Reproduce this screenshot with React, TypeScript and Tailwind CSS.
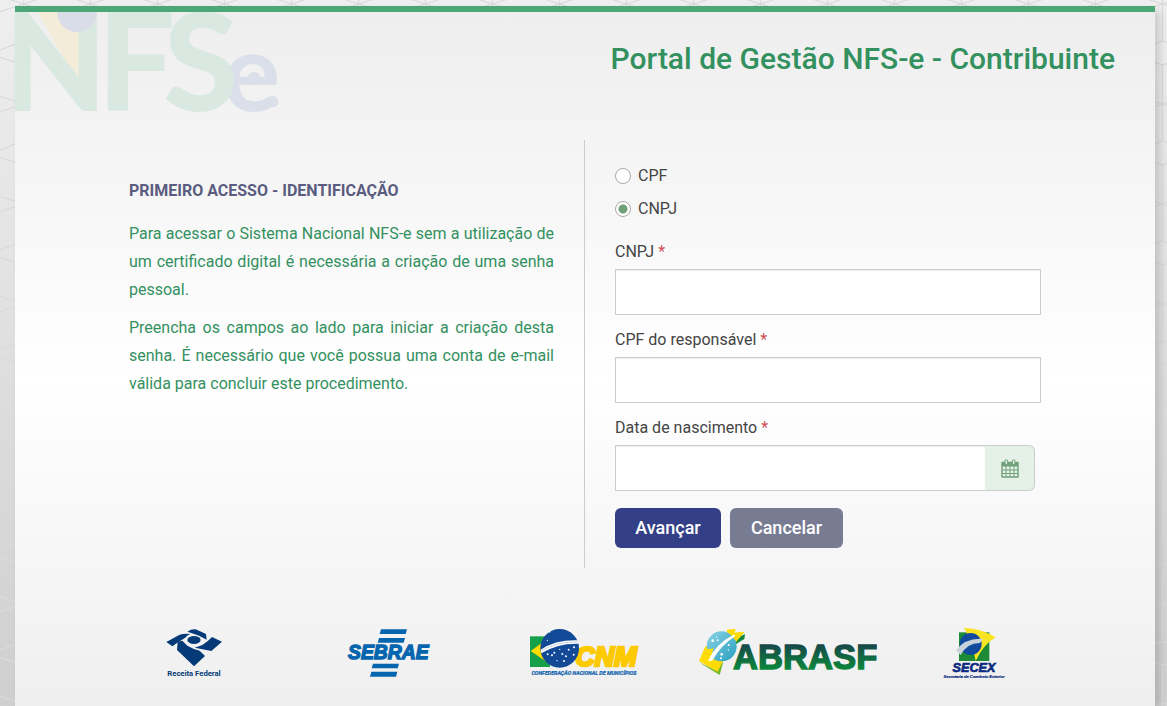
import { useState } from 'react';

function BackgroundPattern() {
  return (
    <svg className="absolute inset-0 h-full w-full" aria-hidden="true">
      <defs>
        <pattern id="cubes" x="-10" y="4" width="67" height="100" patternUnits="userSpaceOnUse">
          <g fill="none" stroke="#dadada" strokeWidth="1.3">
            <path d="M33.5 0V37M33.5 61V100M0 11V89M67 11V89" />
            <path d="M0 11L33.5 0L67 11M0 89L33.5 100L67 89" />
            <path d="M0 50L33.5 37L67 50M0 50L33.5 61L67 50" />
          </g>
        </pattern>
      </defs>
      <rect width="100%" height="100%" fill="url(#cubes)" />
    </svg>
  );
}

function NfseLogo() {
  return (
    <svg className="h-[104px] w-[270px]" viewBox="45 36 810 312" role="img" aria-label="NFSe">
      <path d="M112 36H237V252L200 190Z" fill="#f3ecd9" />
      <g fontFamily="Lato, sans-serif" fontWeight="700">
        <text x="667" y="332" fontSize="326" fill="#dadfe9">e</text>
        <g fontSize="404" fill="#d9e9e2" stroke="#d9e9e2" strokeWidth="6" strokeLinejoin="round">
          <text x="8" y="330">N</text>
          <text x="294" y="330">F</text>
          <text x="492" y="330">S</text>
        </g>
      </g>
      <path d="M171 36A60 60 0 0 0 291 36Z" fill="#d9dde8" />
      <circle cx="763" cy="236" r="20" fill="#dadfe9" />
      <circle cx="818" cy="305" r="17" fill="#dadfe9" />
    </svg>
  );
}

function CalendarIcon() {
  return (
    <svg className="h-[19px] w-[18px]" viewBox="0 0 18 19" fill="none" aria-hidden="true">
      <path d="M1 3.5h16v4H1z" fill="#6fa07a" />
      <path d="M1 3.5h16v14.5H1z" stroke="#6fa07a" strokeWidth="1.4" strokeLinejoin="round" />
      <path d="M1 11h16M1 14.5h16M5 7v11M9 7v11M13 7v11" stroke="#6fa07a" />
      <rect x="4" y="0.8" width="2.6" height="4.6" rx="1.2" fill="#e5f0e6" stroke="#6fa07a" />
      <rect x="11.4" y="0.8" width="2.6" height="4.6" rx="1.2" fill="#e5f0e6" stroke="#6fa07a" />
    </svg>
  );
}

function ReceitaLogo() {
  return (
    <svg className="h-[54px] w-[60px]" viewBox="43 33 180 162" fill="#053a78" role="img" aria-label="Receita Federal">
      <path d="M50 81L90 59Q104 55 122 57Q112 61 107 68Q86 80 68 94Z" />
      <path d="M113 50Q124 42 138 43L169 57L171 74L148 62Q132 56 113 50Z" />
      <ellipse cx="133" cy="75" rx="20" ry="12" />
      <path d="M135 98L158 90Q174 80 187 66L217 80L185 108Z" />
      <path d="M84 80L98 77L113 92Q130 102 150 107L166 123L133 154L82 105Z" />
      <text x="133" y="183" textAnchor="middle" fontSize="23" fontWeight="700" fontFamily="Roboto, sans-serif">
        Receita Federal
      </text>
    </svg>
  );
}

function SebraeLogo() {
  return (
    <svg className="h-[54px] w-[84px]" viewBox="51 33 252 162" fill="#0565ae" role="img" aria-label="Sebrae">
      <path d="M153 43h78l-4 14h-78zM147 69h78l-4 14h-78zM129 146h78l-4 14h-78zM124 170h78l-4 15h-78z" />
      <text x="54" y="133" fontSize="58" fontWeight="700" fontStyle="italic" stroke="#0565ae" strokeWidth="4" fontFamily="'Liberation Sans', sans-serif">
        SEBRAE
      </text>
    </svg>
  );
}

function CnmLogo() {
  return (
    <svg className="h-[54px] w-[112px]" viewBox="24 33 336 162" role="img" aria-label="CNM">
      <path d="M30 64h60v92H30z" fill="#16a049" />
      <path d="M32 108L90 66V148Z" fill="#fedc00" />
      <text x="166" y="153" fontSize="81" fontWeight="700" fontStyle="italic" fill="#fdc900" stroke="#fdc900" strokeWidth="8" fontFamily="'Liberation Sans', sans-serif">
        CNM
      </text>
      <circle cx="119" cy="100" r="58" fill="#124a98" />
      <path d="M62 104Q108 74 172 76L176 86Q112 84 64 115Z" fill="#fff" />
      <path d="M66 107Q112 80 172 81" fill="none" stroke="#6688b8" strokeWidth="2" strokeDasharray="3 2" />
      <g fill="#fff">
        <circle cx="88" cy="50" r="3" />
        <circle cx="82" cy="76" r="2" />
        <circle cx="83" cy="118" r="3" />
        <circle cx="96" cy="121" r="3" />
        <circle cx="103" cy="113" r="3" />
        <circle cx="119" cy="103" r="2" />
        <circle cx="127" cy="117" r="3" />
        <circle cx="138" cy="124" r="3" />
        <circle cx="146" cy="104" r="3" />
        <circle cx="162" cy="97" r="3" />
        <circle cx="161" cy="119" r="3" />
        <circle cx="132" cy="138" r="3" />
        <circle cx="111" cy="137" r="2" />
      </g>
      <text x="192" y="181" textAnchor="middle" fontSize="16" fontWeight="700" fontStyle="italic" fill="#1061ad" stroke="#1061ad" strokeWidth="0.6" fontFamily="Roboto, sans-serif">
        CONFEDERAÇÃO NACIONAL DE MUNICÍPIOS
      </text>
    </svg>
  );
}

function AbrasfLogo() {
  return (
    <svg className="h-[54px] w-[196px]" viewBox="-26 33 588 162" role="img" aria-label="Abrasf">
      <defs>
        <linearGradient id="abrasf-text" x1="0" y1="90" x2="0" y2="166" gradientUnits="userSpaceOnUse">
          <stop offset="0" stopColor="#16484a" />
          <stop offset="1" stopColor="#0b8a3b" />
        </linearGradient>
        <linearGradient id="abrasf-globe" x1="0" y1="0" x2="1" y2="1">
          <stop offset="0" stopColor="#8bd3e6" />
          <stop offset="1" stopColor="#279fc0" />
        </linearGradient>
      </defs>
      <path d="M28 142L90 180L101 140L92 148L84 168Z" fill="#75b72c" />
      <path d="M130 72L166 58L164 72L138 88Z" fill="#118a3e" />
      <path d="M45 98L28 138L84 170L98 142L140 80L165 50L134 54L138 43L113 44L120 53L80 60Z" fill="#ffdb08" />
      <circle cx="96" cy="94" r="45" fill="url(#abrasf-globe)" />
      <path d="M45 98Q60 106 72 98L62 136Q48 124 45 98Z" fill="#ffdb08" />
      <path d="M112 44L138 43L133 53L163 50L136 76Q128 60 112 52Z" fill="#ffdb08" />
      <path d="M55 138Q76 88 134 58L136 64Q92 92 68 137Z" fill="#fff" />
      <g fill="#fff">
        <circle cx="69" cy="77" r="4" />
        <circle cx="81" cy="66" r="2" />
        <circle cx="84" cy="76" r="3" />
        <circle cx="96" cy="118" r="4" />
        <circle cx="94" cy="130" r="3" />
        <circle cx="117" cy="90" r="3" />
        <circle cx="116" cy="105" r="2" />
      </g>
      <text x="130" y="163" fontSize="104" fontWeight="700" fill="url(#abrasf-text)" stroke="url(#abrasf-text)" strokeWidth="4" fontFamily="'Liberation Sans', sans-serif">
        ABRASF
      </text>
    </svg>
  );
}

function SecexLogo() {
  return (
    <svg className="h-[54px] w-[66px]" viewBox="34 33 198 162" role="img" aria-label="Secex">
      <path d="M88 52h91v86H88z" fill="#1d8a35" />
      <path d="M103 38Q160 42 198 67Q160 90 138 138Q130 84 103 38Z" fill="#f8e422" />
      <circle cx="123" cy="87" r="33" fill="#124a9e" />
      <path d="M79 106Q108 68 160 72Q156 80 150 84Q112 84 93 120Z" fill="#c9d3dc" />
      <g fill="#0a2a80" stroke="#0a2a80" fontWeight="700" fontStyle="italic" textAnchor="middle" fontFamily="'Liberation Sans', sans-serif">
        <text x="133" y="171" fontSize="38" strokeWidth="2">SECEX</text>
        <text x="133" y="188" fontSize="12" strokeWidth="0.6">Secretaria de Comércio Exterior</text>
      </g>
    </svg>
  );
}

function Required() {
  return <span className="text-[#cf4f55]">*</span>;
}

const inputClass =
  'h-[46px] w-full border border-[#ccc] bg-white px-3 text-base shadow-[inset_0_1px_1px_rgba(0,0,0,0.075)] focus:outline-none focus:border-[#4ba776]';

const radioClass =
  'h-4 w-4 appearance-none rounded-full border border-[#aaa] bg-white checked:bg-[radial-gradient(circle,#6fa07a_4px,white_5px)]';

export default function App() {
  const [tipo, setTipo] = useState('cnpj');

  return (
    <div className="relative min-h-screen bg-linear-to-b from-[#efefef] to-[#cfcfcf] pt-1.5 pl-[15px] pr-3 font-[Roboto,sans-serif] text-base text-[#444]">
      <BackgroundPattern />

      <main className="relative min-h-[calc(100vh-6px)] border-t-6 border-[#4ba776] bg-linear-to-b from-[#eee] via-white via-[53%] to-[#efefef] shadow-[5px_5px_8px_rgba(0,0,0,0.15)]">
        <header className="flex h-32 items-start justify-between">
          <NfseLogo />
          <h1 className="mt-7 mr-10 text-[30px] leading-[38px] font-medium text-[#33905f]">
            Portal de Gestão NFS-e - Contribuinte
          </h1>
        </header>

        <div className="grid grid-cols-2 px-[10%]">
          <section className="border-r border-[#ccc] pt-[37px] pr-[30px] text-justify leading-7 text-[#33905f]">
            <h2 className="mb-[15px] font-bold text-[#5a5c80]">PRIMEIRO ACESSO - IDENTIFICAÇÃO</h2>
            <p className="mb-[10px]">
              Para acessar o Sistema Nacional NFS-e sem a utilização de um certificado digital é
              necessária a criação de uma senha pessoal.
            </p>
            <p>
              Preencha os campos ao lado para iniciar a criação desta senha. É necessário que você
              possua uma conta de e-mail válida para concluir este procedimento.
            </p>
          </section>

          <form className="pt-6 pb-5 pl-[30px]" onSubmit={(e) => e.preventDefault()}>
            <div className="mb-[19px] flex flex-col items-start gap-[9px]">
              <label className="flex items-center gap-[7px]">
                <input type="radio" name="tipo" className={radioClass} checked={tipo === 'cpf'} onChange={() => setTipo('cpf')} />
                CPF
              </label>
              <label className="flex items-center gap-[7px]">
                <input type="radio" name="tipo" className={radioClass} checked={tipo === 'cnpj'} onChange={() => setTipo('cnpj')} />
                CNPJ
              </label>
            </div>

            <div className="mb-[13px]">
              <label htmlFor="cnpj" className="mb-[5px] block">
                CNPJ <Required />
              </label>
              <input id="cnpj" type="text" className={inputClass} />
            </div>

            <div className="mb-[13px]">
              <label htmlFor="cpf" className="mb-[5px] block">
                CPF do responsável <Required />
              </label>
              <input id="cpf" type="text" className={inputClass} />
            </div>

            <div className="mb-[17px]">
              <label htmlFor="nascimento" className="mb-[5px] block">
                Data de nascimento <Required />
              </label>
              <div className="mr-1.5 flex">
                <input id="nascimento" type="text" className={`${inputClass} border-r-0`} />
                <button
                  type="button"
                  aria-label="Abrir calendário"
                  className="flex w-[50px] shrink-0 items-center justify-center rounded-r-md border border-l-0 border-[#ccc] bg-[#e5f0e6]"
                >
                  <CalendarIcon />
                </button>
              </div>
            </div>

            <div className="flex gap-[9px] text-lg font-medium text-white">
              <button type="submit" className="h-10 w-[106px] rounded-md bg-[#334087]">
                Avançar
              </button>
              <button type="button" className="h-10 w-[113px] rounded-md bg-[#787c93]">
                Cancelar
              </button>
            </div>
          </form>
        </div>

        <footer className="mt-[58px] grid grid-cols-5 justify-items-center pr-[83px] pb-6 pl-[81px]">
          <ReceitaLogo />
          <SebraeLogo />
          <CnmLogo />
          <AbrasfLogo />
          <SecexLogo />
        </footer>
      </main>
    </div>
  );
}
